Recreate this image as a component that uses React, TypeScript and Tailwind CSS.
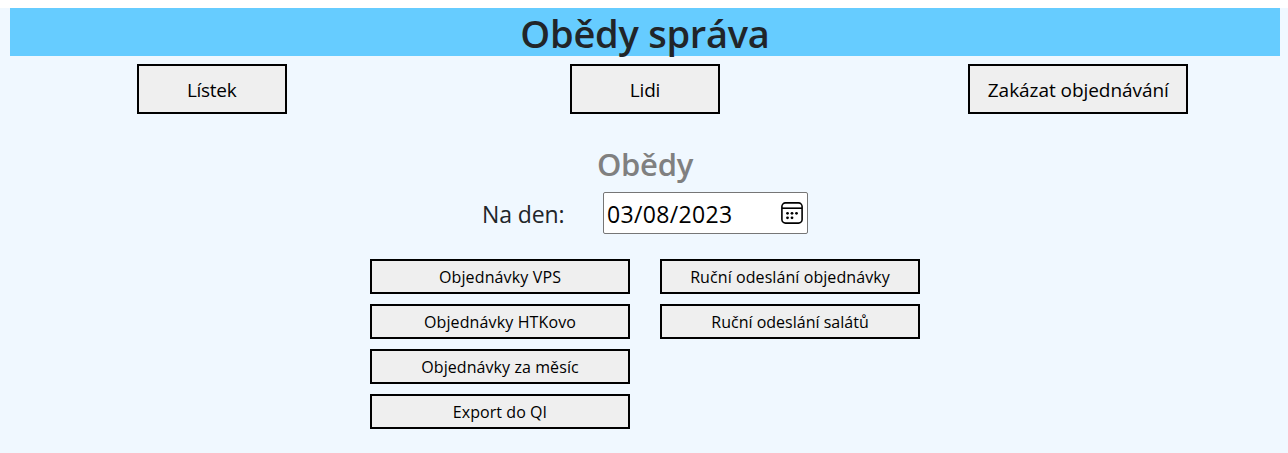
import { useState } from 'react';

const navButtons = [
  { label: 'Lístek', className: 'w-[150px] tracking-[-0.3px]' },
  { label: 'Lidi', className: 'w-[150px] tracking-[-0.2px]' },
  { label: 'Zakázat objednávání', className: 'w-[220px] tracking-[-0.05px]' },
];

const actionColumns = [
  [
    { label: 'Objednávky VPS', className: 'tracking-[0.14px]' },
    { label: 'Objednávky HTKovo', className: 'tracking-[0.13px]' },
    { label: 'Objednávky za měsíc', className: 'tracking-[0.08px]' },
    { label: 'Export do QI', className: 'tracking-[0.06px]' },
  ],
  [
    { label: 'Ruční odeslání objednávky', className: 'tracking-[0.08px]' },
    { label: 'Ruční odeslání salátů', className: 'tracking-[0.01px]' },
  ],
];

function CalendarIcon() {
  return (
    <svg width="22" height="22" viewBox="0 0 22 22" fill="none" stroke="#000" strokeWidth="1.6">
      <rect x="0.9" y="0.9" width="20.2" height="20.2" rx="3.6" />
      <path d="M1 6.2H21" />
      <g fill="#000" stroke="none">
        <circle cx="6.5" cy="11.3" r="1.4" />
        <circle cx="11" cy="11.3" r="1.4" />
        <circle cx="15.5" cy="11.3" r="1.4" />
        <circle cx="6.5" cy="15.8" r="1.4" />
        <circle cx="11" cy="15.8" r="1.4" />
      </g>
    </svg>
  );
}

export default function App() {
  const [date] = useState('03/08/2023');
  return (
    <div className="h-screen overflow-hidden bg-white pt-2 font-['Open_Sans',sans-serif] text-[#212529]">
      <main className="h-full w-[1290px] bg-[#f0f8ff] px-[10px]">
        <h1 className="flex h-12 items-center justify-center bg-[#66ccff] text-[38px] leading-[48px] font-semibold tracking-[-0.25px]">
          <span className="pt-[2px]">Obědy správa</span>
        </h1>
        <nav className="-mx-[15px] mt-2 grid grid-cols-3 justify-items-center">
          {navButtons.map((b) => (
            <button key={b.label} className={`h-[50px] border-2 border-black bg-[#efefef] pt-[2px] text-[19px] whitespace-nowrap text-black ${b.className}`}>
              {b.label}
            </button>
          ))}
        </nav>
        <h2 className="mt-[31px] h-[39px] text-center text-[31px] leading-[38px] font-semibold tracking-[-0.3px] text-[#808080]">Obědy</h2>
        <div className="mt-2 ml-[472px] flex items-center">
          <label className="w-[121px] pt-[2px] text-[23px] tracking-[-0.1px]">Na den:</label>
          <div className="flex h-[42px] w-[205px] items-center justify-between rounded-[2px] border border-[#767676] bg-white pr-[4px] pl-[3px] text-[23px] text-black">
            <span className="pt-[2px] tracking-[0.35px]">{date}</span>
            <CalendarIcon />
          </div>
        </div>
        <div className="mt-[25px] flex items-start justify-center gap-[30px]">
          {actionColumns.map((col, i) => (
            <div key={i} className="flex flex-col gap-[10px]">
              {col.map((b) => (
                <button key={b.label} className={`h-[35px] w-[260px] border-2 border-black bg-[#efefef] text-[16px] whitespace-nowrap text-black ${b.className}`}>
                  {b.label}
                </button>
              ))}
            </div>
          ))}
        </div>
      </main>
    </div>
  );
}
